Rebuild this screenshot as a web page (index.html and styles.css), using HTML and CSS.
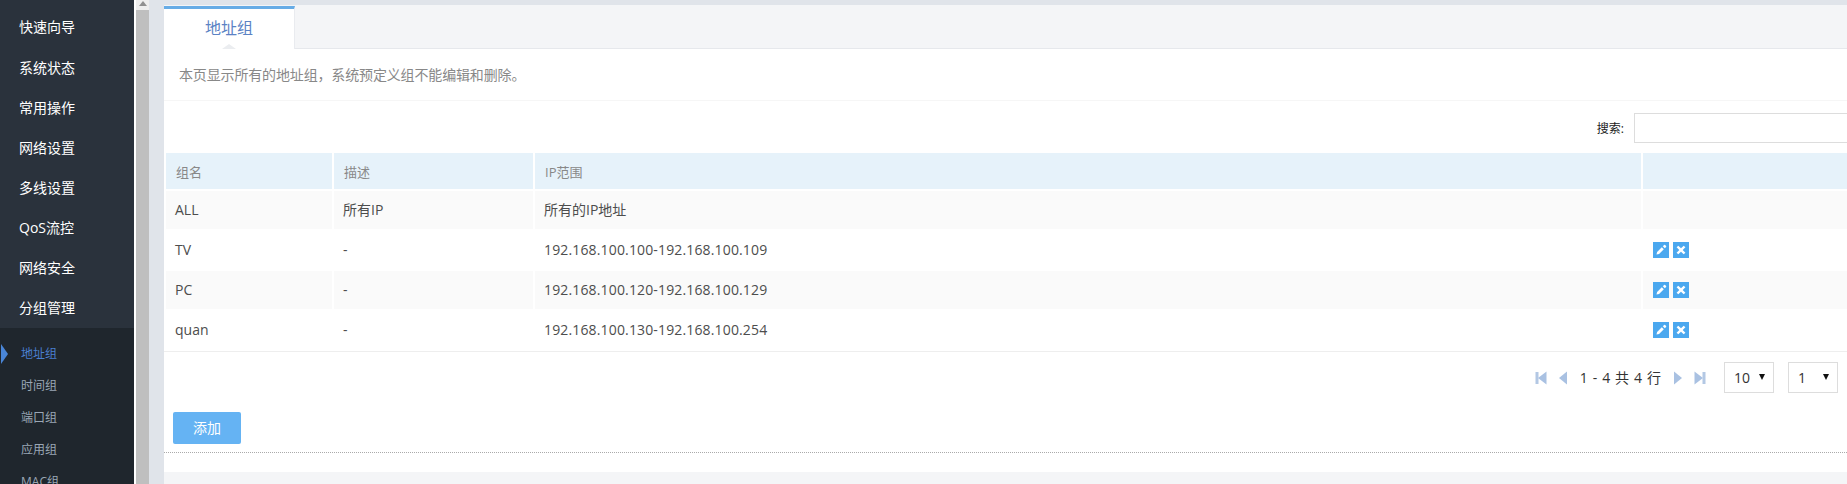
FILE: index.html
```html
<!DOCTYPE html>
<html lang="zh">
<head>
<meta charset="utf-8">
<title>地址组</title>
<link rel="stylesheet" href="styles.css">
</head>
<body>
<div class="app">
  <aside class="sidebar">
    <ul class="menu">
      <li>快速向导</li>
      <li>系统状态</li>
      <li>常用操作</li>
      <li>网络设置</li>
      <li>多线设置</li>
      <li>QoS流控</li>
      <li>网络安全</li>
      <li>分组管理</li>
    </ul>
    <ul class="submenu">
      <li class="current">地址组</li>
      <li>时间组</li>
      <li>端口组</li>
      <li>应用组</li>
      <li>MAC组</li>
    </ul>
  </aside>
  <div class="scrollbar"><div class="scroll-up"><span class="scroll-arrow"></span></div><div class="scroll-thumb"></div></div>
  <main class="main">
    <div class="panel">
      <div class="tabs"><div class="tab">地址组<span class="tab-notch"></span></div></div>
      <p class="desc">本页显示所有的地址组，系统预定义组不能编辑和删除。</p>
      <div class="search"><label class="search-label">搜索:</label><input class="search-input" type="text"></div>
      <table class="grid">
        <thead>
          <tr><th class="c1">组名</th><th class="c2">描述</th><th class="c3">IP范围</th><th></th></tr>
        </thead>
        <tbody>
          <tr><td>ALL</td><td>所有IP</td><td>所有的IP地址</td><td></td></tr>
          <tr><td>TV</td><td>-</td><td class="latin">192.168.100.100-192.168.100.109</td><td><div class="actions"><span class="act"><svg viewBox="0 0 16 16"><path d="M3.500 12.500l.6-2.600 4.700-4.700 2 2-4.700 4.700zM9.800 4.200l1.300-1.300q.5-.4 1 0l1 1q.4.500 0 1l-1.300 1.300z" fill="#fff"/></svg></span><span class="act"><svg viewBox="0 0 16 16"><path d="M5.300 3.700L8 6.300l2.700-2.600 1.700 1.600L9.700 8l2.700 2.700-1.700 1.600L8 9.700l-2.700 2.600-1.700-1.600L6.300 8 3.600 5.300z" fill="#fff"/></svg></span></div></td></tr>
          <tr><td>PC</td><td>-</td><td class="latin">192.168.100.120-192.168.100.129</td><td><div class="actions"><span class="act"><svg viewBox="0 0 16 16"><path d="M3.500 12.500l.6-2.600 4.700-4.700 2 2-4.700 4.700zM9.800 4.200l1.300-1.300q.5-.4 1 0l1 1q.4.500 0 1l-1.300 1.300z" fill="#fff"/></svg></span><span class="act"><svg viewBox="0 0 16 16"><path d="M5.300 3.700L8 6.300l2.700-2.600 1.700 1.600L9.700 8l2.700 2.700-1.700 1.600L8 9.700l-2.700 2.600-1.700-1.600L6.300 8 3.600 5.300z" fill="#fff"/></svg></span></div></td></tr>
          <tr><td>quan</td><td>-</td><td class="latin">192.168.100.130-192.168.100.254</td><td><div class="actions"><span class="act"><svg viewBox="0 0 16 16"><path d="M3.500 12.500l.6-2.600 4.700-4.700 2 2-4.700 4.700zM9.800 4.200l1.300-1.300q.5-.4 1 0l1 1q.4.500 0 1l-1.300 1.300z" fill="#fff"/></svg></span><span class="act"><svg viewBox="0 0 16 16"><path d="M5.300 3.700L8 6.300l2.700-2.600 1.700 1.600L9.700 8l2.700 2.700-1.700 1.600L8 9.700l-2.700 2.600-1.700-1.600L6.300 8 3.600 5.300z" fill="#fff"/></svg></span></div></td></tr>
        </tbody>
      </table>
      <div class="pager">
        <svg class="pg pg-edge" viewBox="0 0 12 14"><rect x="0.500" y="1" width="3" height="12" fill="#b3c8e4"/><path d="M11.500 0.500v13L3 7z" fill="#a9c1e2"/></svg>
        <svg class="pg pg-step" viewBox="0 0 8 14"><path d="M8 0.500v13L0 7z" fill="#a9c1e2"/></svg>
        <span class="pg-text">1 - 4 共 4 行</span>
        <svg class="pg pg-step" viewBox="0 0 8 14"><path d="M0 0.500v13L8 7z" fill="#a9c1e2"/></svg>
        <svg class="pg pg-edge" viewBox="0 0 12 14"><path d="M0.500 0.500v13L9 7z" fill="#a9c1e2"/><rect x="8.500" y="1" width="3" height="12" fill="#b3c8e4"/></svg>
        <div class="sel sel-first"><select class="sel-box"><option>10</option></select></div>
        <div class="sel"><select class="sel-box"><option>1</option></select></div>
      </div>
      <div class="btn-row"><button class="btn" type="button">添加</button></div>
      <div class="foot"></div>
      <div class="panel-end"></div>
    </div>
  </main>
</div>
</body>
</html>
```
FILE: styles.css
```css
* { box-sizing: border-box; }
html, body { margin: 0; padding: 0; height: 484px; overflow: hidden; background: #fff; }
body { font-family: "Open Sans", "Noto Sans CJK SC", sans-serif; font-size: 14px; color: #444; }
ul { list-style: none; margin: 0; padding: 0; }

.app { display: flex; height: 484px; width: 1847px; overflow: hidden; }

.sidebar { width: 134px; flex: none; background: #2a323c; color: #fff; margin-right: 2px; overflow: hidden; }
.menu { padding-top: 8px; height: 328px; }
.menu li { height: 40px; line-height: 40px; padding-left: 19px; font-size: 14px; }
.menu li:first-child { margin-top: -1px; margin-bottom: 1px; }
.submenu { background: #1f262d; padding-top: 10px; height: 170px; }
.submenu li { position: relative; height: 32px; line-height: 32px; padding-left: 21px; font-size: 12px; color: #9aa7b5; }
.submenu .current { color: #4a7fd0; }
.submenu .current::before { content: ""; position: absolute; left: 1px; top: 6px; border-left: 7px solid #4a86d8; border-top: 10px solid transparent; border-bottom: 10px solid transparent; }

.scrollbar { width: 13px; flex: none; background: #bfbfbf; display: flex; flex-direction: column; }
.scroll-up { height: 10px; background: #eeeeee; display: flex; justify-content: center; padding-top: 1px; }
.scroll-arrow { width: 0; height: 0; border-left: 4px solid transparent; border-right: 4px solid transparent; border-bottom: 5px solid #909090; }
.scroll-thumb { flex: 1; }

.main { flex: 1; min-width: 0; background: #e0e4ea; padding: 5px 0 0 15px; }
.panel { background: #fff; height: 479px; display: flex; flex-direction: column; }

.tabs { height: 44px; flex: none; background: #f4f5f7; border-bottom: 1px solid #e6e8ec; padding-top: 1px; }
.tab { position: relative; width: 131px; height: 43px; background: #fff; border-top: 3px solid #67ace6; border-right: 1px solid #e9ebef; text-align: center; line-height: 39px; font-size: 16px; color: #5b82c4; }
.tab-notch { position: absolute; left: 58px; bottom: 0; width: 0; height: 0; border-left: 7px solid transparent; border-right: 7px solid transparent; border-bottom: 5px solid #ebedf0; }

.desc { margin: 0; height: 52px; flex: none; line-height: 52px; padding-left: 15px; font-size: 14px; letter-spacing: -0.15px; color: #888; border-bottom: 1px solid #f6f6f6; }

.search { height: 52px; flex: none; display: flex; align-items: center; justify-content: flex-end; padding-top: 2px; }
.search-label { font-size: 12px; color: #222; margin-right: 10px; }
.search-input { width: 213px; height: 30px; border: 1px solid #dddddd; border-right: 0; background: #fff; }

.grid { width: 100%; flex: none; border-collapse: separate; border-spacing: 0; table-layout: fixed; }
.grid th, .grid td { text-align: left; font-weight: 400; border-right: 2px solid #fff; padding: 0 0 0 10px; }
.grid th { height: 38px; background: #e6f2fa; color: #888; font-size: 13px; border-bottom: 2px solid #fff; }
.grid td { height: 40px; font-size: 14px; color: #4d4d4d; border-bottom: 2px solid #fff; padding: 0 0 2px 9px; }
.grid tr:nth-child(odd) td { background: #fafafa; }
.grid th:first-child, .grid td:first-child { border-left: 2px solid #fff; }
.grid .latin { letter-spacing: 0.15px; }
.grid .c1 { width: 170px; }
.grid .c2 { width: 201px; }
.grid .c3 { width: 1108px; }
.grid th:last-child, .grid td:last-child { border-right: 0; }

.actions { display: flex; gap: 4px; margin-left: 1px; padding-top: 2px; }
.act { width: 16px; height: 16px; background: #4ba8ef; display: block; }
.act svg { display: block; width: 16px; height: 16px; }

.pager { height: 61px; flex: none; border-top: 1px solid #eeeeee; padding: 10px 9px 0 0; display: flex; justify-content: flex-end; }
.pager > * { align-self: flex-start; }
.pager .pg { margin-top: 9px; }
.pg { display: block; flex: none; height: 14px; }
.pg-edge { width: 12px; margin: 0 6px; }
.pg-step { width: 8px; margin: 0 6px; }
.pg-text { font-size: 14px; color: #333; margin: 5px 7px 0; word-spacing: 1.3px; }
.sel { position: relative; width: 50px; height: 31px; margin-left: 14px; }
.sel-first { margin-left: 12px; }
.sel-box { width: 100%; height: 100%; appearance: none; border: 1px solid #dddddd; background: #fff; padding-left: 9px; font-family: "Open Sans", sans-serif; font-size: 14px; color: #333; border-radius: 0; }
.sel::after { content: ""; position: absolute; right: 9px; top: 12px; border-left: 3px solid transparent; border-right: 3px solid transparent; border-top: 6px solid #111; pointer-events: none; }

.btn-row { padding: 0 0 0 9px; height: 40px; flex: none; }
.btn { display: block; width: 68px; height: 32px; border: 0; padding: 0 0 2px; border-radius: 2px; background: #65b3f3; color: #fff; font-family: "Noto Sans CJK SC", sans-serif; font-size: 14px; }

.foot { height: 20px; flex: none; border-top: 1px dotted #aaaaaa; }
.panel-end { flex: 1; background: #f4f5f7; }
```
